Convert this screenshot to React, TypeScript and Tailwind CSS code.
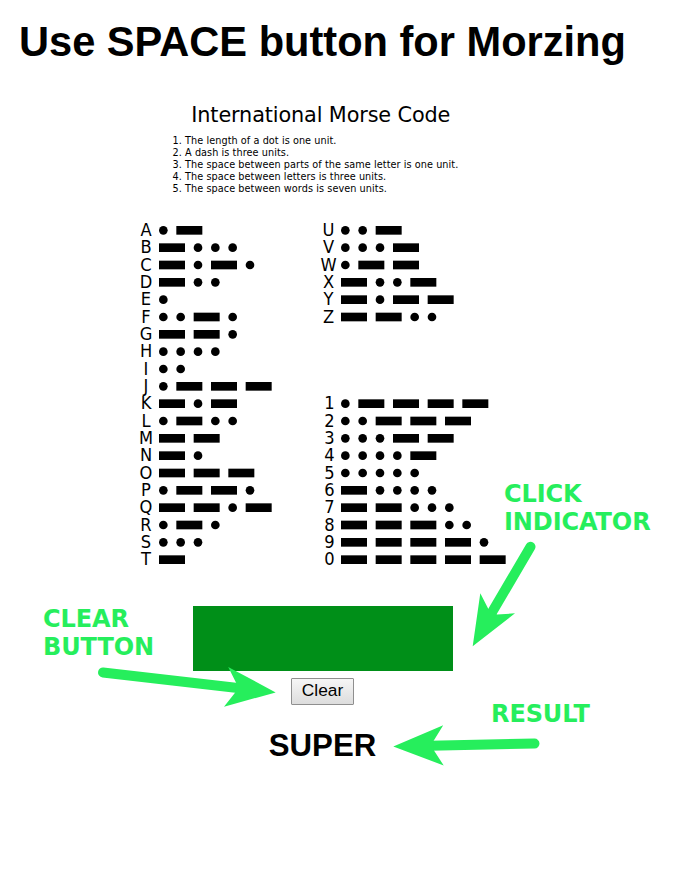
const U = 26 / 3;
const ROW = 52 / 3;

const LEFT: [string, string][] = [
  ["A", ".-"], ["B", "-..."], ["C", "-.-."], ["D", "-.."], ["E", "."],
  ["F", "..-."], ["G", "--."], ["H", "...."], ["I", ".."], ["J", ".---"],
  ["K", "-.-"], ["L", ".-.."], ["M", "--"], ["N", "-."], ["O", "---"],
  ["P", ".--."], ["Q", "--.-"], ["R", ".-."], ["S", "..."], ["T", "-"],
];

const RIGHT: [string, string][] = [
  ["U", "..-"], ["V", "...-"], ["W", ".--"], ["X", "-..-"], ["Y", "-.--"],
  ["Z", "--.."], ["", ""], ["", ""], ["", ""], ["", ""],
  ["1", ".----"], ["2", "..---"], ["3", "...--"], ["4", "....-"], ["5", "....."],
  ["6", "-...."], ["7", "--..."], ["8", "---.."], ["9", "----."], ["0", "-----"],
];

const RULES = [
  "The length of a dot is one unit.",
  "A dash is three units.",
  "The space between parts of the same letter is one unit.",
  "The space between letters is three units.",
  "The space between words is seven units.",
];

function Signals({ rows }: { rows: [string, string][] }) {
  return (
    <svg width="168" height="347" className="block shrink-0">
      {rows.map(([, code], r) => {
        let x = 0;
        return code.split("").map((c, i) => {
          const start = x;
          x += c === "." ? 2 * U : 4 * U;
          return c === "." ? (
            <circle key={`${r}-${i}`} cx={start + U / 2} cy={r * ROW + U / 2} r={U / 2} />
          ) : (
            <rect key={`${r}-${i}`} x={start} y={r * ROW} width={3 * U} height={U} />
          );
        });
      })}
    </svg>
  );
}

function CodeColumn({ rows, letterWidth }: { rows: [string, string][]; letterWidth: string }) {
  return (
    <div className="flex">
      <div className={`flex shrink-0 origin-center scale-x-[0.94] translate-y-[0.6px] flex-col text-center text-[17.33px] ${letterWidth}`}>
        {rows.map(([letter], i) => (
          <div key={i} className={`h-[17.333px] leading-[17.333px] ${/\d/.test(letter) ? "pl-[2px]" : ""}`}>{letter}</div>
        ))}
      </div>
      <div className="pt-[5px]">
        <Signals rows={rows} />
      </div>
    </div>
  );
}

function Label({ className, children }: { className: string; children: React.ReactNode }) {
  return (
    <div className={`absolute whitespace-pre font-['DejaVu_Sans',sans-serif] text-[24px] font-bold leading-[28px] text-[#26ee5c] ${className}`}>
      {children}
    </div>
  );
}

export default function App() {
  return (
    <div className="relative h-[870px] w-[675px] overflow-hidden bg-white font-['Liberation_Sans',Arial,sans-serif] text-black">
      <h1 className="pl-[19px] pt-[18px] text-[41.6px] font-bold leading-[48px] whitespace-nowrap">
        Use SPACE button for Morzing
      </h1>

      <section className="font-['DejaVu_Sans',sans-serif]">
        <h2 className="mt-[36px] pl-[191.3px] text-[20.8px] leading-[26px] tracking-[-0.13px] whitespace-nowrap">
          International Morse Code
        </h2>
        <ol className="mt-[7px] pl-[172.5px] text-[9.7px] leading-[12px] tracking-[0.07px] whitespace-nowrap">
          {RULES.map((rule, i) => (
            <li key={rule}>{i + 1}. {rule}</li>
          ))}
        </ol>
        <div className="mt-[26px] flex pl-[133px]">
          <div className="w-[183px] shrink-0"><CodeColumn rows={LEFT} letterWidth="w-[26px]" /></div>
          <CodeColumn rows={RIGHT} letterWidth="w-[25px]" />
        </div>
      </section>

      <main className="flex w-[645px] flex-col items-center pt-[33px]">
        <div className="h-[65px] w-[260px] bg-[#008f18]" />
        <button className="mt-[7px] h-[27px] w-[63px] rounded-[1px] border border-[#8f8f8f] bg-linear-to-b from-[#f6f6f6] to-[#dddddd] pb-[2px] text-[17.33px] leading-[23px]">
          Clear
        </button>
        <h2 className="mt-[23px] text-[31.2px] font-bold leading-[36px]">SUPER</h2>
      </main>

      <Label className="left-[504px] top-[480px] tracking-[-0.1px]">{"CLICK\nINDICATOR"}</Label>
      <Label className="left-[43px] top-[605px] tracking-[-0.1px]">{"CLEAR\nBUTTON"}</Label>
      <Label className="left-[491px] top-[700px] tracking-[-0.1px]">RESULT</Label>

      <svg width="675" height="870" className="pointer-events-none absolute inset-0" fill="#26ee5c" stroke="#26ee5c">
        <g strokeWidth="10" strokeLinecap="round">
          <path d="M530.5 546.8L491 614" />
          <path d="M103 672.5L240 688.3" />
          <path d="M534.5 743.5L430 745.8" />
        </g>
        <g stroke="none">
          <path d="M472.7 646.3L480.3 593.3L488.5 609.2L497 614.5L515 613.3Z" />
          <path d="M275.7 692.4L228.2 667L236.2 683L235.2 692.5L224 706.7Z" />
          <path d="M393.3 746.5L443.2 725.3L433.5 741L434 750.5L443.7 765.5Z" />
        </g>
      </svg>
    </div>
  );
}
